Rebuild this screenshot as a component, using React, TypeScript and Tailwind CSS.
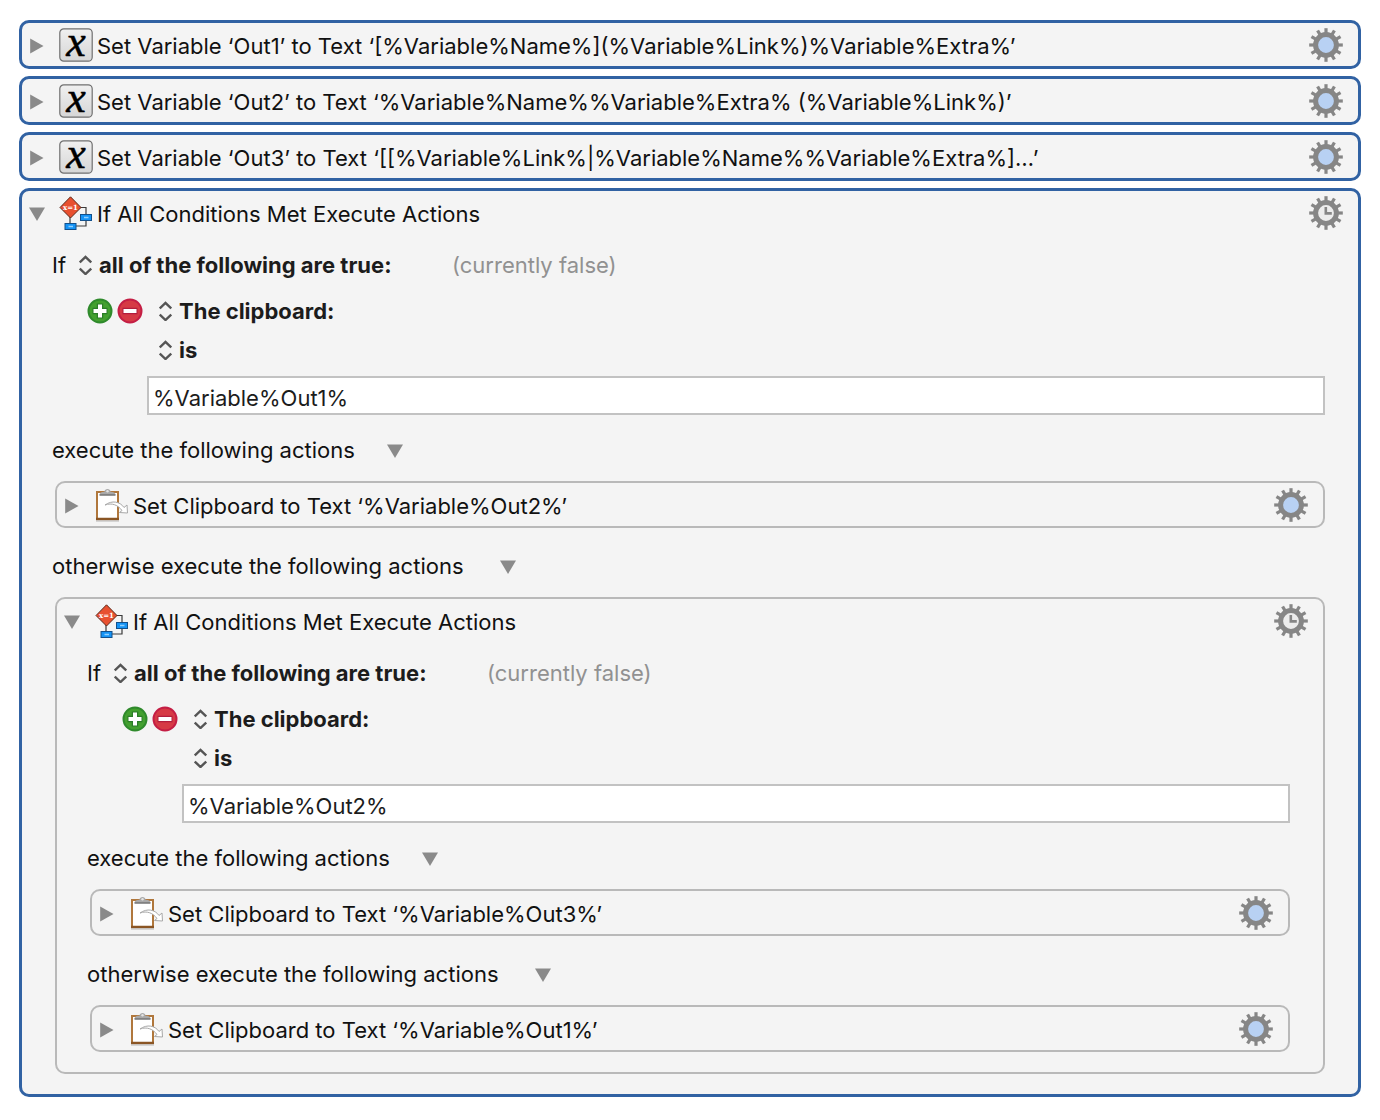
import type { ReactNode } from "react";
import clsx from "clsx";

const teeth = Array.from({ length: 12 }, (_, i) => i * 30);

function Gear({ clock }: { clock?: boolean }) {
  return (
    <button type="button" aria-label="Action options" className="shrink-0">
      <svg width="34" height="34" viewBox="0 0 34 34">
        <g fill="#868686">
          {teeth.map((deg) => (
            <rect key={deg} x="15.4" y="0.2" width="3.2" height="6" transform={`rotate(${deg} 17 17)`} />
          ))}
        </g>
        <circle cx="17" cy="17" r="10.4" fill={clock ? "#ececec" : "#b8d1f3"} stroke="#868686" strokeWidth="5" />
        {clock && <path d="M16.8 11v6.4h6" fill="none" stroke="#868686" strokeWidth="2.6" />}
      </svg>
    </button>
  );
}

function Triangle({ open, label }: { open?: boolean; label: string }) {
  return (
    <button type="button" aria-label={label} className="flex w-4 shrink-0 justify-center pt-0.5">
      <svg width="16" height="16" viewBox="0 0 16 16" fill="#8a8a8a">
        {open ? <path d="M0 1.500h16L8 15z" /> : <path d="M1.200 0.500v15L14.500 8z" />}
      </svg>
    </button>
  );
}

function VariableIcon() {
  return (
    <svg width="34" height="34" viewBox="0 0 34 34" className="overflow-visible">
      <defs>
        <linearGradient id="tile" x1="0" y1="0" x2="0" y2="1">
          <stop offset="0" stopColor="#f0f0f0" />
          <stop offset="1" stopColor="#d6d6d6" />
        </linearGradient>
      </defs>
      <rect x="0.8" y="0.8" width="32.4" height="32.4" rx="4" fill="url(#tile)" stroke="#707070" strokeWidth="1.200" />
      <text
        x="17"
        y="27.500"
        textAnchor="middle"
        fontFamily="Liberation Serif, serif"
        fontSize="44"
        fontStyle="italic"
        stroke="#000"
        strokeWidth="0.5"
      >
        x
      </text>
    </svg>
  );
}

function BranchIcon() {
  return (
    <svg width="34" height="34" viewBox="0 0 34 34">
      <path d="M11 20v8M19 11.500h8v18.500h-12" fill="none" stroke="#3a3a3a" strokeWidth="1.200" />
      <path d="M11.500 0.800L22 11.500L11.500 22L1 11.500z" fill="#e8502f" stroke="#5b2a1c" strokeWidth="1" />
      <text
        x="11.500"
        y="13.500"
        textAnchor="middle"
        fill="#fff"
        fontFamily="DejaVu Serif, serif"
        fontSize="7"
        fontWeight="700"
      >
        x=1
      </text>
      <rect x="21.500" y="18.500" width="11" height="6" fill="#1593f5" stroke="#12508c" />
      <rect x="6" y="27.500" width="11" height="6" fill="#1593f5" stroke="#12508c" />
      <path d="M25 21.500h4.500M9.500 30.500h4.500" stroke="#8fd0ff" strokeWidth="1.500" />
    </svg>
  );
}

function ClipboardIcon() {
  return (
    <svg width="34" height="34" viewBox="0 0 34 34">
      <rect x="2" y="4" width="21" height="27" fill="#fff" stroke="#b0773c" strokeWidth="2" />
      <path d="M1 31h23" stroke="#8a5524" strokeWidth="2.500" />
      <path d="M1 33h23" stroke="#b5b5b5" />
      <path d="M4.500 7c0-2.500 2-3.200 5-3.200 0-3.600 6-3.600 6 0 3 0 5 0.700 5 3.200z" fill="#a9a9a9" />
      <path d="M4.500 7h16" stroke="#757575" strokeWidth="1.500" />
      <circle cx="12.500" cy="3.200" r="1.200" fill="#e4e4e4" />
      <path
        d="M10 17c7-5 15-3.500 19 2.500l3-2.500 0.500 8-8-0.500 2.500-2C23 17 17 14.500 10 17z"
        fill="#fff"
        stroke="#a8a8a8"
      />
    </svg>
  );
}

const icons = {
  variable: VariableIcon,
  branch: BranchIcon,
  clipboard: ClipboardIcon,
};

type ActionProps = {
  icon: keyof typeof icons;
  title: string;
  selected?: boolean;
  children?: ReactNode;
};

function Action({ icon, title, selected, children }: ActionProps) {
  const Icon = icons[icon];
  const open = Boolean(children);
  return (
    <section
      className={clsx(
        "rounded-[10px] bg-[#f4f4f4]",
        selected ? "border-3 border-[#3162a3]" : "border-2 border-[#b9b9b9]",
      )}
    >
      <header className="flex h-[43px] items-center pr-[15px] pl-[7px]">
        <Triangle open={open} label={open ? "Collapse action" : "Expand action"} />
        <div className={clsx("shrink-0", selected ? "ml-[14px]" : "ml-[15px]")}>
          <Icon />
        </div>
        <h2 className="ml-1 min-w-0 flex-1 truncate pt-0.5">{title}</h2>
        <Gear clock={open} />
      </header>
      {open && <div className="px-[33px] pt-2 pb-5">{children}</div>}
    </section>
  );
}

function Popup({ label, value }: { label: string; value: string }) {
  return (
    <label className="flex items-center gap-[7px]">
      <svg width="13" height="20" viewBox="0 0 13 20" fill="none" stroke="#555" strokeWidth="2.400">
        <path d="M0.800 7.500L6.500 2l5.700 5.500M0.800 13.500L6.500 19l5.700-5.500" />
      </svg>
      <select aria-label={label} className="appearance-none bg-transparent font-bold text-[#1c1c1c] outline-none">
        <option>{value}</option>
      </select>
    </label>
  );
}

function RoundButton({ kind }: { kind: "add" | "remove" }) {
  const add = kind === "add";
  return (
    <button type="button" aria-label={add ? "Add condition" : "Remove condition"}>
      <svg width="26" height="26" viewBox="0 0 26 26">
        <circle cx="13" cy="13" r="11.500" fill={add ? "#43a02f" : "#d63a45"} stroke={add ? "#2f8a2c" : "#c41e44"} strokeWidth="2" />
        <path
          d={add ? "M13 5.500v15M5.500 13h15" : "M5.500 13h15"}
          stroke={add ? "#2b7d28" : "#b31d3c"}
          strokeWidth="6.500"
        />
        <path d={add ? "M13 6.500v13M6.500 13h13" : "M6.500 13h13"} stroke="#fff" strokeWidth="4" />
      </svg>
    </button>
  );
}

function IfBody({ value, then, otherwise }: { value: string; then: ReactNode; otherwise: ReactNode }) {
  return (
    <>
      <div className="-ml-[3px] flex h-[46px] items-center">
        <span className="w-[27px]">If</span>
        <Popup label="Match" value="all of the following are true:" />
        <span className="ml-[60px] text-[#919191]">(currently false)</span>
      </div>
      <div className="ml-8 flex h-[46px] items-center">
        <div className="mr-4 flex gap-1">
          <RoundButton kind="add" />
          <RoundButton kind="remove" />
        </div>
        <Popup label="Condition" value="The clipboard:" />
      </div>
      <div className="ml-[104px] flex h-8 items-center">
        <Popup label="Comparison" value="is" />
      </div>
      <div className="mt-[10px] ml-[92px]">
        <input
          aria-label="Clipboard text"
          defaultValue={value}
          className="block h-[39px] w-full border-2 border-[#c2c2c2] bg-white px-1 pt-1 text-[#1c1c1c] outline-none"
        />
      </div>
      <div className="-ml-[3px] flex h-[66px] items-center gap-8 pt-1">
        <span>execute the following actions</span>
        <Triangle open label="Toggle actions" />
      </div>
      {then}
      <div className="-ml-[3px] flex h-[69px] items-center gap-9 pt-1.5">
        <span>otherwise execute the following actions</span>
        <Triangle open label="Toggle otherwise actions" />
      </div>
      {otherwise}
    </>
  );
}

export default function App() {
  return (
    <main className="flex flex-col gap-[7px] bg-white px-[19px] pt-5 pb-6 font-['Inter',sans-serif] text-[22px] leading-7 text-[#111]">
      <Action selected icon="variable" title="Set Variable ‘Out1’ to Text ‘[%Variable%Name%](%Variable%Link%)%Variable%Extra%’" />
      <Action selected icon="variable" title="Set Variable ‘Out2’ to Text ‘%Variable%Name%%Variable%Extra% (%Variable%Link%)’" />
      <Action selected icon="variable" title="Set Variable ‘Out3’ to Text ‘[[%Variable%Link%|%Variable%Name%%Variable%Extra%]…’" />
      <Action selected icon="branch" title="If All Conditions Met Execute Actions">
        <IfBody
          value="%Variable%Out1%"
          then={<Action icon="clipboard" title="Set Clipboard to Text ‘%Variable%Out2%’" />}
          otherwise={
            <Action icon="branch" title="If All Conditions Met Execute Actions">
              <IfBody
                value="%Variable%Out2%"
                then={<Action icon="clipboard" title="Set Clipboard to Text ‘%Variable%Out3%’" />}
                otherwise={<Action icon="clipboard" title="Set Clipboard to Text ‘%Variable%Out1%’" />}
              />
            </Action>
          }
        />
      </Action>
    </main>
  );
}
